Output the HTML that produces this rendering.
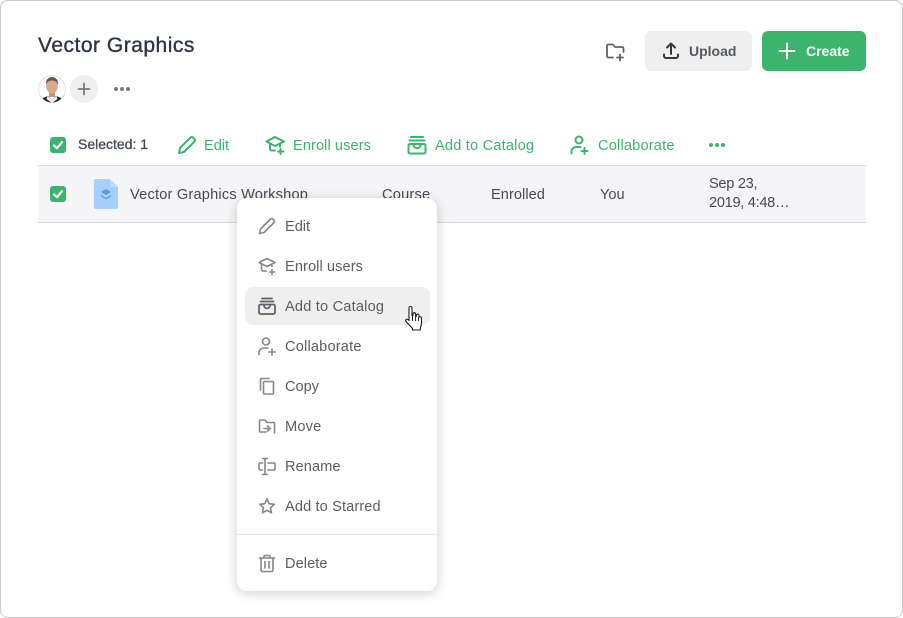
<!DOCTYPE html>
<html><head><meta charset="utf-8">
<style>
html,body{margin:0;padding:0;background:#fff}
body{width:903px;height:618px;position:relative;overflow:hidden;font-family:"Liberation Sans",sans-serif;color:#3d4350}
.frame{position:absolute;left:0;top:0;width:901px;height:616px;border:1px solid #c9c9c9;border-radius:8px;background:#fff}
.t{position:absolute;white-space:nowrap;font-size:14.6px;line-height:22px}
.g{color:#3cb46e}
.i{position:absolute;fill:none;stroke-linecap:round;stroke-linejoin:round}
.ig{stroke:#3cb46e;stroke-width:2}
.im{stroke:#85878c;stroke-width:1.6}
.row{position:absolute;left:38px;top:165px;width:828px;height:56px;background:#f5f5f7;border-top:1px solid #e0e0e2;border-bottom:1px solid #d8d8da}
.cb{position:absolute;width:16px;height:16px;border-radius:3px;background:#3cb46e}
.menu{position:absolute;left:237px;top:198px;width:200px;height:393px;background:#fff;border-radius:10px;box-shadow:0 2px 12px rgba(0,0,0,.2)}
.hl{position:absolute;left:245px;top:287px;width:185px;height:38px;background:#efefef;border-radius:8px}
.m{color:#5a5d65}
</style></head><body>
<div class="frame"></div>

<div class="t" style="left:38px;top:33px;font-size:21px;line-height:26px;color:#2e3340;letter-spacing:.5px;-webkit-text-stroke:.35px #2e3340">Vector Graphics</div>

<!-- avatar -->
<svg style="position:absolute;left:38px;top:75px" width="28" height="28" viewBox="0 0 28 28">
<defs><clipPath id="c"><circle cx="14" cy="14" r="13.500"/></clipPath></defs>
<circle cx="14" cy="14" r="13.500" fill="#fff" stroke="#e2e2e2"/>
<g clip-path="url(#c)">
<path d="M2 28c1-5 5-6 8-7l4 4 4-4c3 1 7 2 8 7z" fill="#1e2a3c"/>
<path d="M9.500 21l4.500 4 4.500-4 1 3-5.500 4-5.500-4z" fill="#eef0f2"/>
<rect x="11" y="15" width="6" height="7" fill="#c99276"/>
<ellipse cx="14" cy="11" rx="5.800" ry="7.500" fill="#dba88e"/>
<path d="M8.200 10c-.8-5.500 2.300-8 5.800-8s6.600 2.500 5.800 8c-.8-3-2.300-4.500-5.800-4.500S9 7 8.200 10z" fill="#6a5442"/>
</g></svg>
<!-- add -->
<div style="position:absolute;left:70px;top:75px;width:28px;height:28px;border-radius:50%;background:#efeff0"></div>
<svg class="i" style="left:70px;top:75px;stroke:#76787d;stroke-width:1.800" width="28" height="28"><path d="M14 8.500v11M8.500 14h11"/></svg>
<svg style="position:absolute;left:113px;top:85px" width="18" height="8" fill="#75777c"><circle cx="3" cy="4" r="2"/><circle cx="9" cy="4" r="2"/><circle cx="15" cy="4" r="2"/></svg>

<!-- top right -->
<svg class="i" style="left:604px;top:41px;stroke:#5f636b;stroke-width:1.800" width="22" height="22" viewBox="0 0 22 22"><path d="M9 16.500H4.500a1.500 1.500 0 0 1-1.500-1.500V5a1.500 1.500 0 0 1 1.500-1.500H9l2 2.500h7a1.500 1.500 0 0 1 1.500 1.500V11"/><path d="M16 13.500v6M13 16.500h6"/></svg>
<div style="position:absolute;left:645px;top:31px;width:107px;height:40px;border-radius:6px;background:#efefef"></div>
<svg class="i" style="left:662px;top:42px;stroke:#33373f;stroke-width:2" width="18" height="18" viewBox="0 0 18 18"><path d="M9 12V2M5 5.500L9 1.500l4 4M2 12.500v1.500a2 2 0 0 0 2 2h10a2 2 0 0 0 2-2v-1.500"/></svg>
<div class="t" style="left:689px;top:41px;font-size:14px;line-height:20px;font-weight:bold;color:#55585f">Upload</div>
<div style="position:absolute;left:762px;top:31px;width:104px;height:40px;border-radius:6px;background:#3cb46e"></div>
<svg class="i" style="left:778px;top:42px;stroke:#fff;stroke-width:2" width="18" height="18"><path d="M9 1.500v15M1.500 9h15"/></svg>
<div class="t" style="left:806px;top:41px;font-size:14px;line-height:20px;font-weight:bold;color:#fff">Create</div>

<!-- action bar -->
<div class="cb" style="left:50px;top:137px"></div>
<svg class="i" style="left:50px;top:137px;stroke:#fff;stroke-width:2.200" width="16" height="16"><path d="M4 8.500l3 2.700 5-6"/></svg>
<div class="t" style="left:78px;top:134px;font-size:14px;line-height:20px;color:#454953;-webkit-text-stroke:.3px #454953">Selected: 1</div>

<svg class="i ig" style="left:177px;top:135px" width="20" height="20" viewBox="0 0 20 20"><path d="M2 18l1-5L13.500 2.500a1.800 1.800 0 0 1 2.500 0l1.500 1.500a1.800 1.800 0 0 1 0 2.500L7 17z"/></svg>
<div class="t g" style="left:204px;top:135px;letter-spacing:-.03px">Edit</div>

<svg class="i ig" style="left:265px;top:135px" width="22" height="20" viewBox="0 0 22 20"><path d="M10 2l9 4.500-9 4.500-8.500-4.500zM5 9v5a2 2 0 0 0 2 1.500h3M15 9.500v2"/><path d="M15.500 14v5M13 16.500h5.500"/></svg>
<div class="t g" style="left:293px;top:135px;letter-spacing:.08px">Enroll users</div>

<svg class="i ig" style="left:407px;top:135px" width="20" height="20" viewBox="0 0 20 20"><path d="M4 2h12M2.500 5.500h15"/><rect x="1.500" y="9" width="17" height="9.500" rx="1.500"/><path d="M6.500 9.500c0 5 7 5 7 0"/></svg>
<div class="t g" style="left:435px;top:135px;letter-spacing:.19px">Add to Catalog</div>

<svg class="i ig" style="left:570px;top:135px" width="20" height="20" viewBox="0 0 20 20"><circle cx="9" cy="5" r="3.500"/><path d="M1.500 18.500v-2c0-3 2.500-4.500 5-4.500h4"/><path d="M14.500 13v6M11.500 16h6"/></svg>
<div class="t g" style="left:598px;top:135px;letter-spacing:.18px">Collaborate</div>
<svg style="position:absolute;left:708px;top:141px" width="18" height="8" fill="#3cb46e"><circle cx="3" cy="4" r="2"/><circle cx="9" cy="4" r="2"/><circle cx="15" cy="4" r="2"/></svg>

<!-- row -->
<div class="row"></div>
<div class="cb" style="left:50px;top:186px"></div>
<svg class="i" style="left:50px;top:186px;stroke:#fff;stroke-width:2.200" width="16" height="16"><path d="M4 8.500l3 2.700 5-6"/></svg>
<svg style="position:absolute;left:94px;top:179px" width="24" height="30" viewBox="0 0 24 30"><path d="M2 0h14l8 8v20a2 2 0 0 1-2 2H2a2 2 0 0 1-2-2V2a2 2 0 0 1 2-2z" fill="#a6d0fb"/><path d="M16 0l8 8h-6a2 2 0 0 1-2-2z" fill="#bcdcfc"/><path d="M12 10l5 3-5 3-5-3z" fill="#5a9be0"/><path d="M7 16l5 3 5-3v1.500l-5 3-5-3z" fill="#5a9be0"/></svg>
<div class="t" style="left:130px;top:184px;letter-spacing:.2px;color:#454953">Vector Graphics Workshop</div>
<div class="t" style="left:382px;top:184px;color:#454953;letter-spacing:.22px">Course</div>
<div class="t" style="left:491px;top:184px;color:#454953;letter-spacing:.05px">Enrolled</div>
<div class="t" style="left:600px;top:184px;color:#454953;letter-spacing:.02px">You</div>
<div class="t" style="left:709px;top:175px;color:#454953;line-height:19px;letter-spacing:-.3px">Sep 23,<br>2019, 4:48…</div>

<!-- menu -->
<div class="menu"></div>
<div class="hl"></div>
<div style="position:absolute;left:237px;top:534px;width:200px;height:1px;background:#e8e8e8"></div>

<svg class="i im" style="left:257px;top:216px" width="20" height="20" viewBox="0 0 20 20"><path d="M2.500 17.500l1-4.500L13.500 3a1.700 1.700 0 0 1 2.400 0l1.100 1.100a1.700 1.700 0 0 1 0 2.400L7 16.500z"/></svg>
<div class="t m" style="left:285px;top:216px;letter-spacing:-.03px">Edit</div>

<svg class="i im" style="left:257px;top:256px" width="20" height="20" viewBox="0 0 20 20"><path d="M10 2.500l8 4-8 4-8-4zM4.500 8.500v5a2 2 0 0 0 2 1.500h3M15 9v1.500"/><path d="M15 13.500v5M12.500 16h5"/></svg>
<div class="t m" style="left:285px;top:256px;letter-spacing:.08px">Enroll users</div>

<svg class="i" style="left:257px;top:296px;stroke:#5d6068;stroke-width:1.700" width="20" height="20" viewBox="0 0 20 20"><path d="M5 2.500h10M3.500 5.500h13"/><rect x="2" y="8.500" width="16" height="9.500" rx="1.500"/><path d="M7 9c0 4.500 6 4.500 6 0"/></svg>
<div class="t m" style="left:285px;top:296px;letter-spacing:.19px">Add to Catalog</div>

<!-- cursor -->
<svg style="position:absolute;left:403px;top:305px" width="20" height="28" viewBox="0 0 20 28"><path d="M6 3a1.500 1.500 0 0 1 3 0v7.500l1 .2V9a1.300 1.300 0 0 1 2.600 0v2l.9.200V10a1.300 1.300 0 0 1 2.500 0v1.700l.6.200a1.300 1.300 0 0 1 1.900 1V18c0 2-.6 3.500-1.200 5v2H9.500v-1.500L3 16.500c-1-1.300.5-3 2-2l1 1z" fill="#fff" stroke="#1f1f1f" stroke-width="1.100" stroke-linejoin="round"/><path d="M9.500 11v5M12.600 11v5M15.500 12v4" stroke="#1f1f1f" fill="none"/></svg>

<svg class="i im" style="left:257px;top:336px" width="20" height="20" viewBox="0 0 20 20"><circle cx="9" cy="5.500" r="3.500"/><path d="M2 18.500v-2c0-3 2.500-4.500 5-4.500h4"/><path d="M15 13v6M12 16h6"/></svg>
<div class="t m" style="left:285px;top:336px;letter-spacing:.18px">Collaborate</div>

<svg class="i im" style="left:257px;top:376px" width="20" height="20" viewBox="0 0 20 20"><path d="M3.500 14V3.500a1 1 0 0 1 1-1H12"/><rect x="6.500" y="5.500" width="10" height="12.500" rx="1"/></svg>
<div class="t m" style="left:285px;top:376px;letter-spacing:-.03px">Copy</div>

<svg class="i im" style="left:257px;top:416px" width="20" height="20" viewBox="0 0 20 20"><path d="M9 16H3.500a1 1 0 0 1-1-1V5a1 1 0 0 1 1-1H8l2 2.500h6.500a1 1 0 0 1 1 1V17"/><path d="M7 12.500h6M10.500 10l2.500 2.500-2.500 2.500"/></svg>
<div class="t m" style="left:285px;top:416px;letter-spacing:.17px">Move</div>

<svg class="i im" style="left:257px;top:456px" width="20" height="20" viewBox="0 0 20 20"><path d="M5.500 7H3a1 1 0 0 0-1 1v5a1 1 0 0 0 1 1h2.500M11 7h6a1 1 0 0 1 1 1v5a1 1 0 0 1-1 1h-6M8 3v15M5.500 2.500h5M5.500 18.500h5"/></svg>
<div class="t m" style="left:285px;top:456px;letter-spacing:.07px">Rename</div>

<svg class="i im" style="left:257px;top:496px" width="20" height="20" viewBox="0 0 20 20"><path d="M10 3l2.200 4.700 5 .6-3.700 3.500 1 5L10 14.300l-4.500 2.500 1-5L2.800 8.300l5-.6z"/></svg>
<div class="t m" style="left:285px;top:496px;letter-spacing:.12px">Add to Starred</div>

<svg class="i im" style="left:257px;top:553px" width="20" height="20" viewBox="0 0 20 20"><path d="M2.500 5h15M7 5V3.500a1 1 0 0 1 1-1h4a1 1 0 0 1 1 1V5M4 5v12a1.500 1.500 0 0 0 1.500 1.500h9A1.500 1.500 0 0 0 16 17V5M8 8.500v6.500M12 8.500v6.500"/></svg>
<div class="t m" style="left:285px;top:553px;letter-spacing:.07px">Delete</div>
</body></html>
